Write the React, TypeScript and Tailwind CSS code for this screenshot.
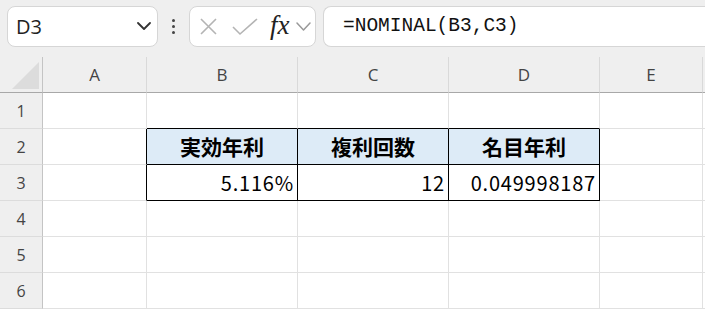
const cols = ['A', 'B', 'C', 'D', 'E'];
const rows = [1, 2, 3, 4, 5, 6];

const jp = { fontFamily: '"Noto Sans CJK JP", "Noto Sans", sans-serif' };
const ui = { fontFamily: '"Open Sans", "Noto Sans", sans-serif' };

function Chevron({ w, h, color, sw }: { w: number; h: number; color: string; sw: number }) {
  return (
    <svg width={w} height={h + 2} viewBox={`0 0 ${w} ${h + 2}`} fill="none" stroke={color} strokeWidth={sw} strokeLinecap="round" strokeLinejoin="round">
      <path d={`M1 1 L${w / 2} ${h} L${w - 1} 1`} />
    </svg>
  );
}

function Cell({ row, col }: { row: number; col: string }) {
  const inTable = (row === 2 || row === 3) && ['B', 'C', 'D'].includes(col);
  const aboveTable = row === 1 && ['B', 'C', 'D'].includes(col);
  const leftOfTable = (row === 2 || row === 3) && col === 'A';

  let cls = 'h-[36px] border-r border-b ';
  if (inTable) cls += 'border-black ';
  else if (aboveTable) cls += 'border-r-[#e1e1e1] border-b-black ';
  else if (leftOfTable) cls += 'border-r-black border-b-[#e1e1e1] ';
  else cls += 'border-[#e1e1e1] ';

  if (row === 2 && inTable) {
    const label = { B: '実効年利', C: '複利回数', D: '名目年利' }[col];
    return (
      <div className={cls + 'bg-[#ddebf7] flex items-center justify-center font-bold text-[21px] text-black'} style={jp}>
        {label}
      </div>
    );
  }
  if (row === 3 && inTable) {
    const value = { B: '5.116%', C: '12', D: '0.049998187' }[col];
    return (
      <div className={cls + 'flex items-center justify-end pr-[3px] text-[20px] tracking-[0.8px] text-black'} style={jp}>
        {value}
      </div>
    );
  }
  return <div className={cls} />;
}

export default function App() {
  return (
    <div className="w-[705px] h-[311px] overflow-hidden bg-white">
      {/* toolbar */}
      <div className="h-[57px] bg-[#efefef] flex items-start pt-[6px] pl-[7px]">
        <div className="w-[151px] h-[41px] bg-white rounded-[8px] border border-[#d6d6d6] flex items-center justify-between pl-[8px] pr-[6px]">
          <span className="text-[20px] text-[#222]" style={ui}>D3</span>
          <Chevron w={14} h={7} color="#333" sw={1.8} />
        </div>
        <div className="w-[31px] h-[41px] flex flex-col items-center justify-center gap-[3px]">
          <span className="w-[3px] h-[3px] rounded-full bg-[#444]" />
          <span className="w-[3px] h-[3px] rounded-full bg-[#444]" />
          <span className="w-[3px] h-[3px] rounded-full bg-[#444]" />
        </div>
        <div className="w-[127px] h-[41px] bg-white rounded-[8px] border border-[#d6d6d6] flex items-center pl-[9px]">
          <svg width="19" height="19" viewBox="0 0 19 19" fill="none" stroke="#b4b4b4" strokeWidth="1.6">
            <path d="M2 2 L17 17 M17 2 L2 17" />
          </svg>
          <svg className="ml-[14px]" width="26" height="19" viewBox="0 0 26 19" fill="none" stroke="#b4b4b4" strokeWidth="1.6">
            <path d="M1 10 L8 17 L25 2" />
          </svg>
          <span className="ml-[12px] text-[27px] italic text-[#222] leading-none mb-[3px]" style={{ fontFamily: '"Liberation Serif", serif' }}>
            fx
          </span>
          <span className="ml-[6px]">
            <Chevron w={15} h={8} color="#999" sw={1.5} />
          </span>
        </div>
        <div className="ml-[7px] flex-1 h-[41px] bg-white rounded-l-[8px] border border-r-0 border-[#d6d6d6] flex items-center pl-[19px]">
          <span className="text-[19.5px] text-[#111]" style={{ fontFamily: '"Liberation Mono", "DejaVu Sans Mono", monospace' }}>
            =NOMINAL(B3,C3)
          </span>
        </div>
      </div>

      {/* sheet */}
      <div className="grid grid-cols-[43px_104px_151px_151px_151px_103px_1fr]">
        <div className="relative h-[36px] bg-[#efefef] border-r border-b border-r-[#c4c4c4] border-b-[#a8a8a8]">
          <svg className="absolute left-0 top-0" width="42" height="35" viewBox="0 0 42 35">
            <polygon points="12,32 39,32 39,5" fill="#dcdcdc" />
          </svg>
        </div>
        {cols.map((c) => (
          <div
            key={c}
            className="h-[36px] bg-[#efefef] border-r border-b border-r-[#d9d9d9] border-b-[#a8a8a8] flex items-center justify-center text-[17px] text-[#444]"
            style={ui}
          >
            {c}
          </div>
        ))}
        <div className="h-[36px] bg-[#efefef] border-b border-b-[#a8a8a8]" />

        {rows.map((r) => (
          <div key={r} className="contents">
            <div
              className="h-[36px] bg-[#efefef] border-r border-b border-r-[#c4c4c4] border-b-[#dcdcdc] flex items-center justify-center text-[16px] text-[#444]"
              style={ui}
            >
              {r}
            </div>
            {cols.map((c) => (
              <Cell key={c} row={r} col={c} />
            ))}
            <div className="h-[36px] border-b border-[#e1e1e1]" />
          </div>
        ))}
      </div>
    </div>
  );
}
